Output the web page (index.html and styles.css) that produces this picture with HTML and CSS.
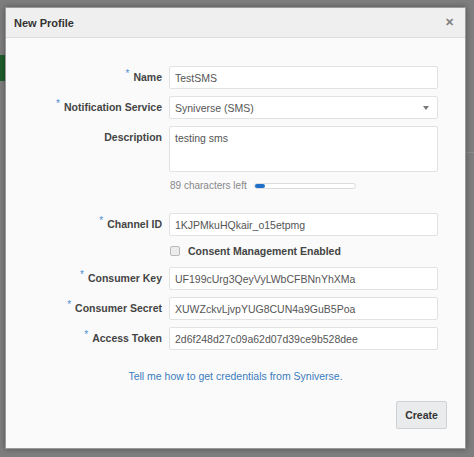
FILE: index.html
```html
<!DOCTYPE html>
<html lang="en">
<head>
  <meta charset="UTF-8" />
  <meta name="viewport" content="width=device-width, initial-scale=1" />
  <title>New Profile</title>
  <link rel="stylesheet" href="styles.css">
</head>
<body>

  <div class="backdrop-tab"></div>
  <div class="backdrop-line"></div>

  <div class="dialog">
    <div class="dialog-header">
      <span class="dialog-title">New Profile</span>
      <span class="close">&#x2715;</span>
    </div>

    <form class="form">
      <div class="row">
        <label class="label"><span class="req">*</span>Name</label>
        <input type="text" class="field" value="TestSMS" />
      </div>

      <div class="row">
        <label class="label"><span class="req">*</span>Notification Service</label>
        <div class="field select">
          <span>Syniverse (SMS)</span>
          <span class="arrow"></span>
        </div>
      </div>

      <div class="row">
        <label class="label">Description</label>
        <textarea class="field area">testing sms</textarea>
      </div>

      <div class="row counter-row">
        <span class="label"></span>
        <div class="counter">
          <span>89 characters left</span>
          <div class="meter"><div class="meter-fill" style="width: 10px"></div></div>
        </div>
      </div>

      <div class="row channel-row">
        <label class="label"><span class="req">*</span>Channel ID</label>
        <input type="text" class="field" value="1KJPMkuHQkair_o15etpmg" />
      </div>

      <div class="row check-row">
        <span class="label"></span>
        <label class="check"><span class="box"></span>Consent Management Enabled</label>
      </div>

      <div class="row">
        <label class="label"><span class="req">*</span>Consumer Key</label>
        <input type="text" class="field" value="UF199cUrg3QeyVyLWbCFBNnYhXMa" />
      </div>

      <div class="row">
        <label class="label"><span class="req">*</span>Consumer Secret</label>
        <input type="text" class="field" value="XUWZckvLjvpYUG8CUN4a9GuB5Poa" />
      </div>

      <div class="row">
        <label class="label"><span class="req">*</span>Access Token</label>
        <input type="text" class="field" value="2d6f248d27c09a62d07d39ce9b528dee" />
      </div>

      <div class="help">
        <a href="#">Tell me how to get credentials from Syniverse.</a>
      </div>

      <div class="actions">
        <button type="button" class="create-btn">Create</button>
      </div>
    </form>
  </div>

</body>
</html>
```

FILE: styles.css
```css
body {
  margin: 0;
  padding: 7px 0 0 5px;
  background-color: #7e7e7e;
  font-family: 'Liberation Sans', Arial, Helvetica, sans-serif;
  height: 457px;
  box-sizing: border-box;
  overflow: hidden;
}

/* page content showing under the overlay */
.backdrop-tab {
  position: absolute;
  left: 0;
  top: 55px;
  width: 6px;
  height: 26px;
  background-color: #1f5e2c;
}

.backdrop-line {
  position: absolute;
  left: 466px;
  top: 152px;
  width: 8px;
  height: 1px;
  background-color: #8c8c8c;
}

.dialog {
  position: relative;
  width: 461px;
  height: 442px;
  box-sizing: border-box;
  background-color: #fafafa;
  border: 1px solid #9a9a9a;
  box-shadow: 0 0 6px rgba(0, 0, 0, 0.35);
  display: flex;
  flex-direction: column;
}

.dialog-header {
  height: 29px;
  flex-shrink: 0;
  background-color: #efefef;
  border-bottom: 1px solid #dcdcdc;
  padding: 0 11px 0 8px;
  display: flex;
  align-items: center;
  justify-content: space-between;
}

.dialog-title {
  font-size: 11px;
  font-weight: bold;
  color: #333;
}

.close {
  font-size: 11px;
  font-weight: bold;
  color: #808080;
}

.form {
  padding-top: 28px;
  display: flex;
  flex-direction: column;
}

.row {
  display: flex;
  align-items: flex-start;
  margin-bottom: 7px;
}

.label {
  width: 156px;
  padding-right: 7px;
  flex-shrink: 0;
  text-align: right;
  font-size: 10.5px;
  font-weight: bold;
  color: #444;
  line-height: 23px;
  height: 23px;
}

.req {
  color: #4b8fd4;
  font-size: 10px;
  font-weight: normal;
  line-height: 0;
  vertical-align: 4px;
  margin-right: 4px;
}

.field {
  width: 269px;
  height: 23px;
  box-sizing: border-box;
  margin: 0;
  padding: 0 5px;
  border: 1px solid #e2e2e2;
  border-radius: 2px;
  background-color: #fff;
  font-family: 'Liberation Sans', Arial, Helvetica, sans-serif;
  font-size: 10.5px;
  color: #555;
}

.select {
  display: flex;
  align-items: center;
  justify-content: space-between;
  padding-right: 8px;
}

.arrow {
  width: 0;
  height: 0;
  border-left: 3.5px solid transparent;
  border-right: 3.5px solid transparent;
  border-top: 4px solid #777;
}

.area {
  height: 46px;
  padding-top: 5px;
  resize: none;
  margin-bottom: 1px;
}

.counter-row {
  margin-bottom: 21px;
}

.counter-row .label,
.check-row .label {
  height: 12px;
  line-height: 12px;
}

.counter {
  display: flex;
  align-items: center;
  gap: 7px;
  padding-left: 1px;
  font-size: 10px;
  color: #888;
  line-height: 12px;
}

.meter {
  width: 100px;
  height: 4px;
  border: 1px solid #dcdcdc;
  border-radius: 3px;
  background-color: #fff;
}

.meter-fill {
  height: 100%;
  background-color: #1e6fc8;
  border-radius: 2px;
}

.channel-row {
  margin-bottom: 8px;
}

.check-row {
  margin-bottom: 9px;
}

.check {
  display: flex;
  align-items: center;
  gap: 8px;
  height: 14px;
  padding-left: 1px;
  font-size: 10.5px;
  font-weight: bold;
  color: #444;
}

.box {
  width: 8px;
  height: 8px;
  border: 1px solid #b9b9b9;
  border-radius: 2px;
  background-color: #ececec;
}

.help {
  margin-top: 13px;
  text-align: center;
  font-size: 10.5px;
  line-height: 12px;
}

.help a {
  color: #3b7cbf;
  text-decoration: none;
}

.actions {
  display: flex;
  justify-content: flex-end;
  padding-right: 18px;
  margin-top: 19px;
}

.create-btn {
  width: 51px;
  height: 28px;
  background-color: #e9ebed;
  border: 1px solid #cfd2d5;
  border-radius: 2px;
  font-family: 'Liberation Sans', Arial, Helvetica, sans-serif;
  font-size: 10.5px;
  font-weight: bold;
  color: #333;
  cursor: pointer;
}
```
